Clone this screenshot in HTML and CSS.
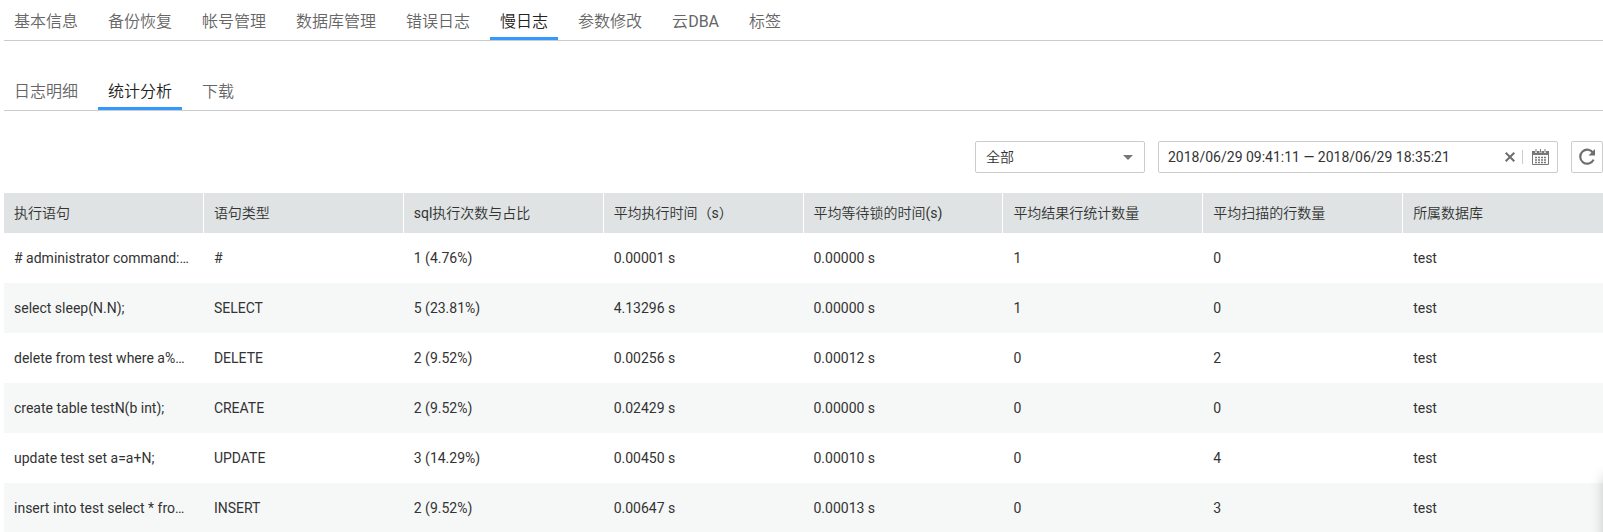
FILE: index.html
```html
<!DOCTYPE html>
<html lang="zh-CN">
<head>
<meta charset="utf-8">
<title>慢日志 - 统计分析</title>
<link rel="stylesheet" href="styles.css">
</head>
<body>
<main class="page">
  <nav class="tabs">
    <a class="tab" href="#">基本信息</a>
    <a class="tab" href="#">备份恢复</a>
    <a class="tab" href="#">帐号管理</a>
    <a class="tab" href="#">数据库管理</a>
    <a class="tab" href="#">错误日志</a>
    <a class="tab active" href="#" aria-current="page">慢日志</a>
    <a class="tab" href="#">参数修改</a>
    <a class="tab" href="#">云<span class="latin">DBA</span></a>
    <a class="tab" href="#">标签</a>
  </nav>
  <nav class="tabs sub-tabs">
    <a class="tab" href="#">日志明细</a>
    <a class="tab active" href="#" aria-current="page">统计分析</a>
    <a class="tab" href="#">下载</a>
  </nav>
  <form class="toolbar">
    <div class="select-box">
      <select class="select" aria-label="语句类型">
        <option>全部</option>
      </select>
      <svg class="arrow" width="10" height="5" viewBox="0 0 10 5" aria-hidden="true"><path d="M0 0h10L5 5z" fill="#777"/></svg>
    </div>
    <div class="date-box">
      <input class="date-input" type="text" aria-label="时间范围" value="2018/06/29 09:41:11 — 2018/06/29 18:35:21">
      <button class="icon-button" type="button" aria-label="清除">
        <svg width="10" height="10" viewBox="0 0 10 10"><path d="M.7.700l8.600 8.600M9.300.700L.7 9.300" fill="none" stroke="#6e6e6e" stroke-width="2"/></svg>
      </button>
      <span class="divider"></span>
      <button class="icon-button" type="button" aria-label="选择日期">
        <svg width="17" height="16" viewBox="0 0 17 16">
          <path d="M.5 3v12.500h16V3" fill="none" stroke="#777"/>
          <path d="M0 2h3v2h2V2h2.500v2h2V2H12v2h2V2h3v4H0z" fill="#777"/>
          <path d="M4 0v3.500M8.500 0v3.500M13 0v3.500" stroke="#777"/>
          <path d="M3 8.500h11M3 11h11M3 13.500h11" fill="none" stroke="#777" stroke-width="1.400" stroke-dasharray="2 1"/>
        </svg>
      </button>
    </div>
    <button class="refresh" type="button" aria-label="刷新">
      <svg width="18" height="18" viewBox="0 0 18 18">
        <path d="M15.300 5.200A7 7 0 1 0 15.600 11.600" fill="none" stroke="#6e6e6e" stroke-width="2.200"/>
        <path d="M17 1v6.500h-6.500z" fill="#6e6e6e"/>
      </svg>
    </button>
  </form>
  <table class="stats">
    <thead>
      <tr><th>执行语句</th><th>语句类型</th><th><span class="latin">sql</span>执行次数与占比</th><th>平均执行时间<span class="unit" lang="zh-TW">（s）</span></th><th>平均等待锁的时间<span class="latin">(s)</span></th><th>平均结果行统计数量</th><th>平均扫描的行数量</th><th>所属数据库</th></tr>
    </thead>
    <tbody>
      <tr><td># administrator command:…</td><td>#</td><td>1 (4.76%)</td><td>0.00001 s</td><td>0.00000 s</td><td>1</td><td>0</td><td>test</td></tr>
      <tr><td>select sleep(N.N);</td><td>SELECT</td><td>5 (23.81%)</td><td>4.13296 s</td><td>0.00000 s</td><td>1</td><td>0</td><td>test</td></tr>
      <tr><td>delete from test where a%…</td><td>DELETE</td><td>2 (9.52%)</td><td>0.00256 s</td><td>0.00012 s</td><td>0</td><td>2</td><td>test</td></tr>
      <tr><td>create table testN(b int);</td><td>CREATE</td><td>2 (9.52%)</td><td>0.02429 s</td><td>0.00000 s</td><td>0</td><td>0</td><td>test</td></tr>
      <tr><td>update test set a=a+N;</td><td>UPDATE</td><td>3 (14.29%)</td><td>0.00450 s</td><td>0.00010 s</td><td>0</td><td>4</td><td>test</td></tr>
      <tr><td>insert into test select * fro…</td><td>INSERT</td><td>2 (9.52%)</td><td>0.00647 s</td><td>0.00013 s</td><td>0</td><td>3</td><td>test</td></tr>
    </tbody>
  </table>
</main>
<aside class="dock"></aside>
</body>
</html>
```
FILE: styles.css
```css
* {
  box-sizing: border-box;
}

body {
  margin: 0;
  background: #fff;
  color: #333;
  font: 14px/20px Roboto, "Noto Sans CJK SC", sans-serif;
}

input,
select,
button {
  margin: 0;
  color: inherit;
  font: inherit;
}

.page {
  padding-left: 4px;
}

.tabs {
  display: flex;
  gap: 10px;
  border-bottom: 1px solid #ccc;
}

.sub-tabs {
  margin-top: 29px;
}

.tab {
  padding: 10px 10px 3px;
  border-bottom: 3px solid transparent;
  color: #666;
  font-size: 16px;
  font-weight: 350;
  line-height: 24px;
  text-decoration: none;
}

.tab.active {
  border-bottom-color: #3399ff;
  color: #222;
}

.latin {
  font-weight: 400;
}

.toolbar {
  display: flex;
  justify-content: flex-end;
  gap: 13px;
  margin: 30px 0 20px;
}

.select-box {
  display: grid;
  align-items: center;
  width: 170px;
}

.select,
.arrow {
  grid-area: 1 / 1;
}

.select {
  appearance: none;
  width: 100%;
  height: 32px;
  padding: 0 10px;
  border: 1px solid #ccc;
  border-radius: 2px;
  background: #fff;
  font-weight: 350;
}

.arrow {
  justify-self: end;
  margin-right: 12px;
  pointer-events: none;
}

.date-box {
  display: flex;
  align-items: center;
  gap: 7px;
  width: 400px;
  height: 32px;
  padding: 0 8px 0 9px;
  border: 1px solid #ccc;
  border-radius: 2px;
}

.date-input {
  flex: 1;
  min-width: 0;
  padding: 0;
  border: 0;
  outline: 0;
  background: none;
}

.icon-button {
  display: flex;
  padding: 0;
  border: 0;
  background: none;
}

.divider {
  width: 1px;
  height: 14px;
  margin-right: 2px;
  background: #ccc;
}

.refresh {
  display: flex;
  align-items: center;
  justify-content: center;
  width: 32px;
  height: 32px;
  padding: 0;
  border: 1px solid #ccc;
  border-radius: 2px;
  background: #fff;
}

.stats {
  width: 100%;
  border-collapse: collapse;
  table-layout: fixed;
}

.stats th,
.stats td {
  overflow: hidden;
  padding: 0 10px;
  text-align: left;
  text-overflow: ellipsis;
  white-space: nowrap;
}

.stats th {
  height: 40px;
  background: #dfe3e4;
  box-shadow: inset -1px 0 #fff;
  font-weight: 350;
}

.stats th:last-child {
  box-shadow: none;
}

.stats td {
  height: 50px;
}

.stats tbody tr:nth-child(even) {
  background: #f6f8f8;
}

.unit {
  font-family: Roboto, "Noto Sans CJK TC", sans-serif;
  font-weight: 400;
}

.dock {
  position: fixed;
  right: -40px;
  bottom: -20px;
  width: 40px;
  height: 76px;
  box-shadow: 0 0 12px rgba(0, 0, 0, 0.2);
}
```
